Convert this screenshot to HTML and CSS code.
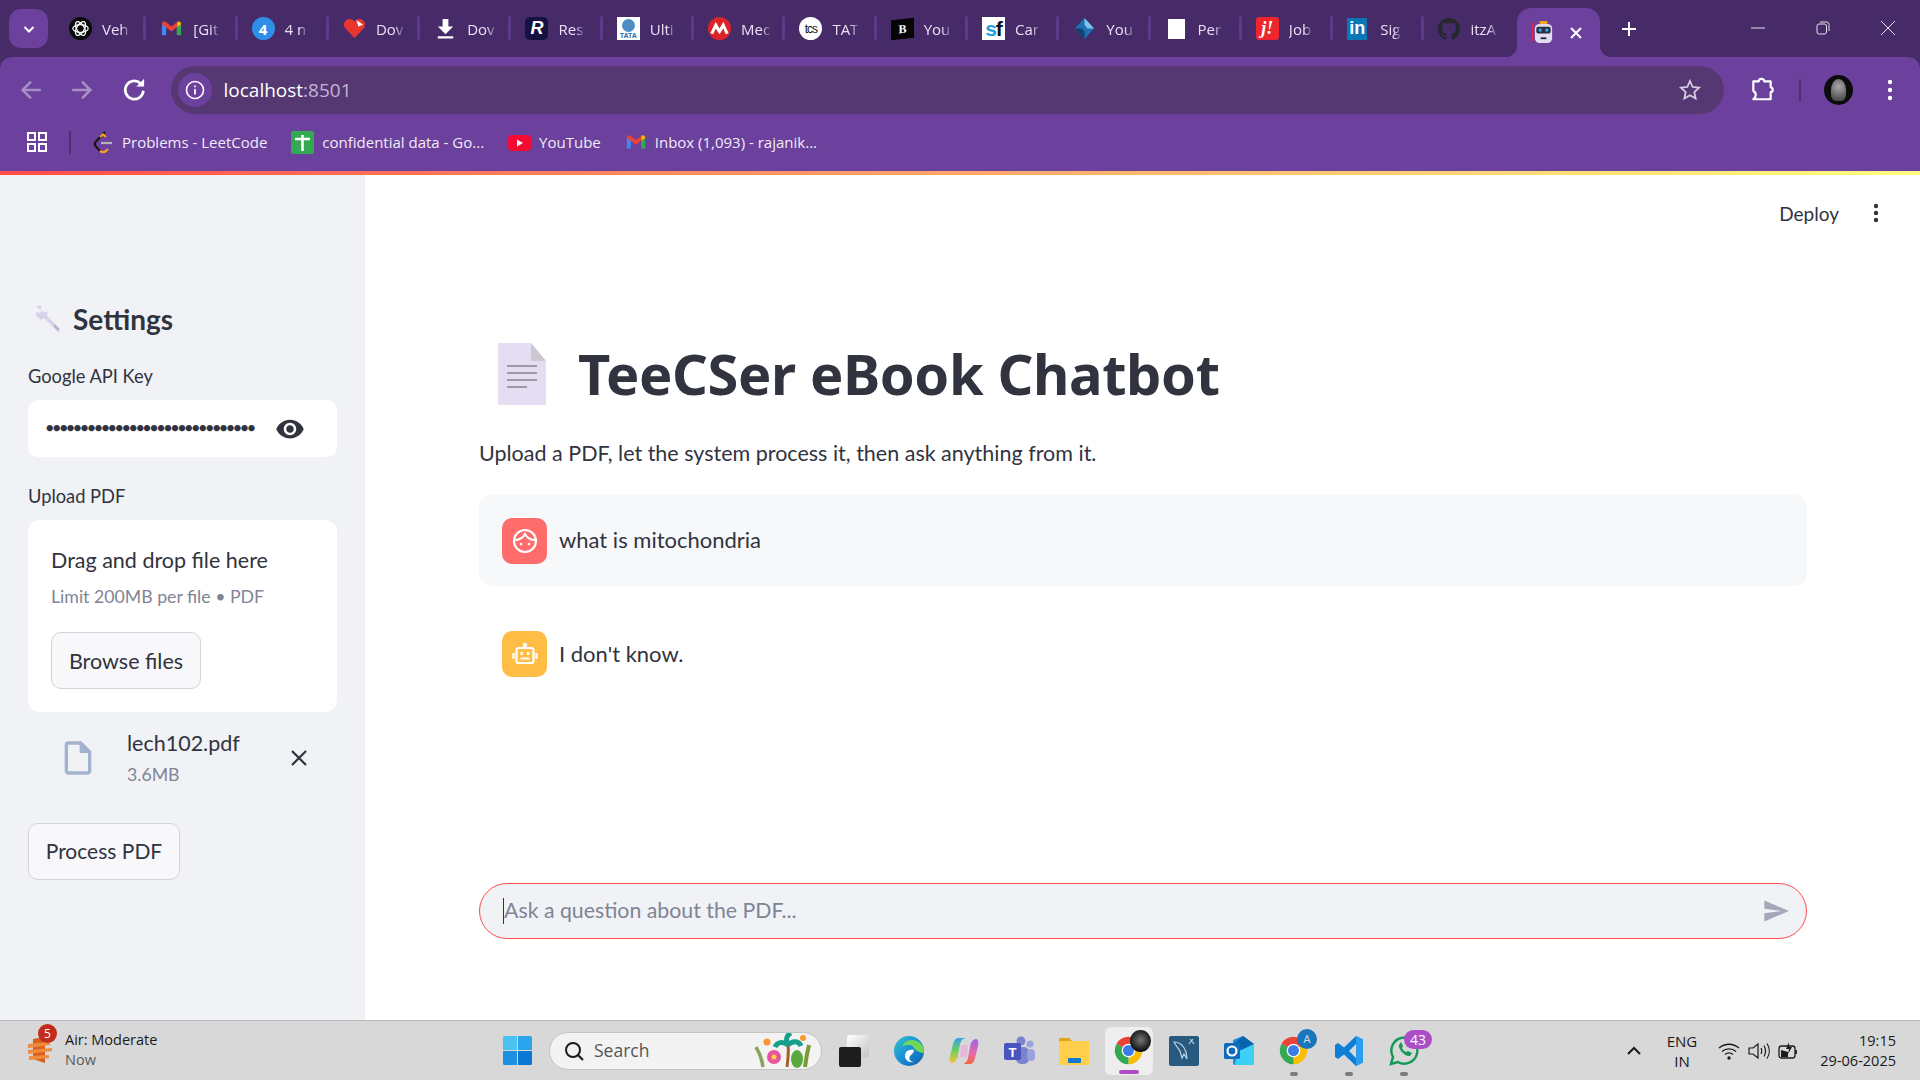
FILE: index.html
```html
<!DOCTYPE html>
<html lang="en">
<head>
  <meta charset="UTF-8" />
  <meta name="viewport" content="width=device-width, initial-scale=1.0" />
  <title>TeeCSer eBook Chatbot</title>
  <link rel="stylesheet" href="styles.css">
</head>
<body>

  <svg class="defs" width="0" height="0">
    <symbol id="chrome" viewBox="0 0 24 24">
      <path fill="#ea4335" d="M12 12L3.34 7A10 10 0 0 1 20.66 7Z"/>
      <path fill="#fbbc04" d="M12 12L20.66 7A10 10 0 0 1 12 22Z"/>
      <path fill="#34a853" d="M12 12L12 22A10 10 0 0 1 3.34 7Z"/>
      <circle cx="12" cy="12" r="5" fill="#fff"/>
      <circle cx="12" cy="12" r="4" fill="#3b7de8"/>
    </symbol>
    <symbol id="gmail" viewBox="0 0 24 24">
      <path fill="#4285f4" d="M2 7v12h4.5v-9z"/>
      <path fill="#34a853" d="M17.5 10v9H22V7z"/>
      <path fill="#ea4335" d="M2 7.5C2 5 4.4 4 6 5.2l6 4.6 6-4.6v5L12 15l-10-7.5z"/>
      <path fill="#fbbc04" d="M18 5.2C19.6 4 22 5 22 7.5l-4 3z"/>
    </symbol>
  </svg>

  <!-- browser tabs -->
  <div class="tabstrip">
    <button class="tab-search">
      <svg width="14" height="14" viewBox="0 0 14 14"><path d="M2.5 5l4.5 4.5L11.5 5" fill="none" stroke="#fff" stroke-width="2"/></svg>
    </button>
    <div class="tabs">
      <div class="tab">
        <svg class="fav" viewBox="0 0 24 24"><circle cx="12" cy="12" r="12" fill="#0a0a0a"/><g fill="none" stroke="#fff" stroke-width="1.3"><ellipse cx="12" cy="12" rx="8" ry="4"/><ellipse cx="12" cy="12" rx="8" ry="4" transform="rotate(60 12 12)"/><ellipse cx="12" cy="12" rx="8" ry="4" transform="rotate(120 12 12)"/></g></svg>
        <span class="tab-text">Veh</span>
      </div>
      <div class="tab">
        <svg class="fav" viewBox="0 0 24 24"><use href="#gmail"/></svg>
        <span class="tab-text">[Git</span>
      </div>
      <div class="tab">
        <span class="fav fav-four">4</span>
        <span class="tab-text">4 n</span>
      </div>
      <div class="tab">
        <svg class="fav" viewBox="0 0 24 24"><path fill="#e8352e" d="M12 22L2.5 12C-1 7.5 2 2 7 2c2 0 4 1 5 3 1-2 3-3 5-3 5 0 8 5.500 4.500 10z"/><path fill="#fff" d="M14 3l7 5-5 2z"/></svg>
        <span class="tab-text">Dov</span>
      </div>
      <div class="tab">
        <svg class="fav" viewBox="0 0 24 24"><path fill="#fff" d="M9 2h6v8h5l-8 8-8-8h5zM4 20h16v2.500H4z"/></svg>
        <span class="tab-text">Dov</span>
      </div>
      <div class="tab">
        <span class="fav fav-r">R</span>
        <span class="tab-text">Res</span>
      </div>
      <div class="tab">
        <span class="fav fav-tata"><i></i>TATA</span>
        <span class="tab-text">Ulti</span>
      </div>
      <div class="tab">
        <svg class="fav" viewBox="0 0 24 24"><circle cx="12" cy="12" r="12" fill="#dd2326"/><path fill="#fff" d="M2.500 17L8 5l4 7 4-7 5.500 12-3 1-2.500-6-4 6-4-6-2.500 6z"/></svg>
        <span class="tab-text">Mec</span>
      </div>
      <div class="tab">
        <span class="fav fav-tcs">tcs</span>
        <span class="tab-text">TAT</span>
      </div>
      <div class="tab">
        <span class="fav fav-b">B</span>
        <span class="tab-text">You</span>
      </div>
      <div class="tab">
        <span class="fav fav-sf"><b>s</b>f</span>
        <span class="tab-text">Car</span>
      </div>
      <div class="tab">
        <svg class="fav" viewBox="0 0 24 24"><path fill="#1f6fb5" d="M12 1l10 11-10 11L2 12z"/><path fill="#7fc4e8" d="M12 1l10 11h-7L12 8z"/><path fill="#12406f" d="M2 12h7l3 3v8z"/></svg>
        <span class="tab-text">You</span>
      </div>
      <div class="tab">
        <span class="fav fav-page"></span>
        <span class="tab-text">Per</span>
      </div>
      <div class="tab">
        <span class="fav fav-j">j!</span>
        <span class="tab-text">Job</span>
      </div>
      <div class="tab">
        <span class="fav fav-in">in</span>
        <span class="tab-text">Sig</span>
      </div>
      <div class="tab tab-last">
        <svg class="fav fav-git" viewBox="0 0 16 16"><path fill="#24272d" d="M8 0C3.58 0 0 3.58 0 8c0 3.54 2.29 6.53 5.47 7.59.4.07.55-.17.55-.38 0-.19-.01-.82-.01-1.49-2.01.37-2.53-.49-2.69-.94-.09-.23-.48-.94-.82-1.13-.28-.15-.68-.52-.01-.53.63-.01 1.08.58 1.23.82.72 1.21 1.87.87 2.33.66.07-.52.28-.87.51-1.07-1.78-.2-3.64-.89-3.64-3.95 0-.87.31-1.59.82-2.15-.08-.2-.36-1.02.08-2.12 0 0 .67-.21 2.2.82.64-.18 1.32-.27 2-.27.68 0 1.36.09 2 .27 1.53-1.04 2.2-.82 2.2-.82.44 1.1.16 1.92.08 2.12.51.56.82 1.27.82 2.15 0 3.07-1.87 3.75-3.65 3.95.29.25.54.73.54 1.48 0 1.07-.01 1.93-.01 2.2 0 .21.15.46.55.38A8.013 8.013 0 0016 8c0-4.42-3.58-8-8-8z"/></svg>
        <span class="tab-text">itzA</span>
      </div>
      <div class="tab-active">
        <svg class="fav" viewBox="0 0 24 24"><path fill="#e0244f" d="M0 1h1.500v20H0z"/><path fill="#f5a623" d="M8 0h8v4H8z"/><rect x="3" y="3" width="18" height="20" rx="5" fill="#e6dcf2"/><rect x="4.500" y="6" width="15" height="7" rx="2" fill="#27303f"/><rect x="7" y="8" width="3" height="3" fill="#38a5f5"/><rect x="14" y="8" width="3" height="3" fill="#38a5f5"/><rect x="9" y="17" width="6" height="2" fill="#27303f"/></svg>
        <svg class="tab-close" width="14" height="14" viewBox="0 0 14 14"><path d="M2 2l10 10M12 2L2 12" stroke="#fff" stroke-width="2"/></svg>
      </div>
    </div>
    <svg class="new-tab" width="16" height="16" viewBox="0 0 16 16"><path d="M8 1v14M1 8h14" stroke="#fff" stroke-width="2"/></svg>
    <div class="win-controls">
      <svg width="14" height="14" viewBox="0 0 14 14"><path d="M0 7h14" stroke="#e6deef" stroke-width="1"/></svg>
      <svg width="14" height="14" viewBox="0 0 14 14"><rect x="1" y="3" width="9.500" height="10" rx="2" fill="none" stroke="#e6deef"/><path d="M4 1h6.500A2.500 2.500 0 0 1 13 3.500V10" fill="none" stroke="#e6deef"/></svg>
      <svg width="14" height="14" viewBox="0 0 14 14"><path d="M0 0l14 14M14 0L0 14" stroke="#e6deef"/></svg>
    </div>
  </div>

  <!-- address bar -->
  <div class="toolbar">
    <svg class="nav-icon" viewBox="0 0 20 20"><path d="M17 10H4M10 4l-6 6 6 6" fill="none" stroke="#a58fc4" stroke-width="1.800"/></svg>
    <svg class="nav-icon" viewBox="0 0 20 20"><path d="M3 10h13M10 4l6 6-6 6" fill="none" stroke="#a58fc4" stroke-width="1.800"/></svg>
    <svg class="nav-icon nav-reload" viewBox="0 0 20 20"><path d="M16 10.500A6.500 6.500 0 1 1 14 5.300" fill="none" stroke="#fff" stroke-width="1.900"/><path d="M16.500 2v5.500H11z" fill="#fff"/></svg>
    <div class="omnibox">
      <span class="site-info">
        <svg width="20" height="20" viewBox="0 0 20 20"><circle cx="10" cy="10" r="8.500" fill="none" stroke="#fff" stroke-width="1.600"/><path d="M10 9v5.500M10 5.500v1.800" stroke="#fff" stroke-width="1.800"/></svg>
      </span>
      <span class="url">localhost<span class="url-port">:8501</span></span>
      <svg class="star" width="24" height="24" viewBox="0 0 24 24"><path d="M12 3l2.700 6 6.300.7-4.700 4.300 1.300 6.500-5.600-3.300-5.600 3.300L7.700 14 3 9.700 9.300 9z" fill="none" stroke="#d5cbe0" stroke-width="1.800"/></svg>
    </div>
    <svg class="ext-icon" width="26" height="26" viewBox="0 0 24 24"><path d="M4 4h5c0-3 5-3 5 0h6v5.500c2.500 0 2.500 4.500 0 4.500v6.500H4c3-2 3-6 0-7.500z" fill="none" stroke="#fff" stroke-width="2" stroke-linejoin="round"/></svg>
    <span class="tool-sep"></span>
    <span class="avatar"><i></i></span>
    <svg class="menu-dots" width="6" height="24" viewBox="0 0 6 24"><circle cx="3" cy="4" r="2.200" fill="#fff"/><circle cx="3" cy="12" r="2.200" fill="#fff"/><circle cx="3" cy="20" r="2.200" fill="#fff"/></svg>
  </div>

  <!-- bookmarks -->
  <div class="bookmarks">
    <svg class="apps" width="20" height="20" viewBox="0 0 20 20"><g fill="none" stroke="#fff" stroke-width="2"><rect x="1" y="1" width="7" height="7"/><rect x="12" y="1" width="7" height="7"/><rect x="1" y="12" width="7" height="7"/><rect x="12" y="12" width="7" height="7"/></g></svg>
    <span class="mark-sep"></span>
    <div class="mark">
      <svg width="22" height="24" viewBox="0 0 22 24"><path d="M13 2L4 11.500c-1.500 1.500-1.500 3.500 0 5l4 4.500" fill="none" stroke="#161616" stroke-width="2.200"/><path d="M8 21c2 1.500 4 1.500 6 0l2-2M8 7l3-2.500 3 2.500" fill="none" stroke="#f5a11c" stroke-width="2.200"/><path d="M9 13h11" stroke="#b6b1b8" stroke-width="2.200"/></svg>
      <span>Problems - LeetCode</span>
    </div>
    <div class="mark">
      <svg width="23" height="23" viewBox="0 0 23 23"><rect width="23" height="23" rx="2" fill="#34a853"/><path d="M4 8h15M11.500 4v16" stroke="#fff" stroke-width="2.600"/></svg>
      <span>confidential data - Go...</span>
    </div>
    <div class="mark">
      <svg width="23" height="23" viewBox="0 0 23 23"><rect y="4" width="23" height="16" rx="4" fill="#f40b34"/><path d="M9 8.500v7l6-3.500z" fill="#fff"/></svg>
      <span>YouTube</span>
    </div>
    <div class="mark">
      <svg width="22" height="22" viewBox="0 0 24 24"><use href="#gmail"/></svg>
      <span>Inbox (1,093) - rajanik...</span>
    </div>
  </div>
  <div class="load-bar"></div>

  <!-- streamlit page -->
  <div class="page">
    <aside class="sidebar">
      <div class="side-title">
        <svg width="32" height="30" viewBox="0 0 30 28"><path d="M3 2l5-1-1 4 3 3 4-1-1 4 12 12c1.500 1.500-1 4-2.500 2.500L11 13.500l-4 1-4-3.500 0-4 3 1.500 2-2z" fill="#d9d0ea"/><path d="M20 20l4 4" stroke="#b9aecb" stroke-width="2"/></svg>
        <h2>Settings</h2>
      </div>
      <label class="field-label">Google API Key</label>
      <div class="key-input">
        <span class="key-dots">••••••••••••••••••••••••••••••</span>
        <svg width="30" height="30" viewBox="0 0 24 24"><path fill="#31333f" d="M12 4.500C7 4.500 2.730 7.610 1 12c1.730 4.390 6 7.500 11 7.500s9.270-3.110 11-7.500c-1.730-4.390-6-7.500-11-7.500zM12 17c-2.760 0-5-2.240-5-5s2.240-5 5-5 5 2.240 5 5-2.240 5-5 5zm0-8c-1.660 0-3 1.340-3 3s1.340 3 3 3 3-1.340 3-3-1.340-3-3-3z"/></svg>
      </div>
      <label class="field-label upload-label">Upload PDF</label>
      <div class="dropzone">
        <div class="drop-title">Drag and drop file here</div>
        <div class="drop-limit">Limit 200MB per file • PDF</div>
        <button class="st-button browse">Browse files</button>
      </div>
      <div class="file-row">
        <svg class="file-icon" width="40" height="40" viewBox="0 0 24 24"><path fill="#a3b2cf" d="M14 2H6c-1.100 0-2 .9-2 2v16c0 1.100.9 2 2 2h12c1.100 0 2-.9 2-2V8l-6-6zM6 20V4h7v5h5v11H6z"/></svg>
        <div class="file-info">
          <div class="file-name">lech102.pdf</div>
          <div class="file-size">3.6MB</div>
        </div>
        <svg class="file-remove" width="18" height="18" viewBox="0 0 18 18"><path d="M2 2l14 14M16 2L2 16" stroke="#31333f" stroke-width="2.200"/></svg>
      </div>
      <button class="st-button process">Process PDF</button>
    </aside>

    <main class="main">
      <div class="topbar">
        <span class="deploy">Deploy</span>
        <svg width="6" height="20" viewBox="0 0 6 20"><circle cx="3" cy="3" r="2.200" fill="#31333f"/><circle cx="3" cy="10" r="2.200" fill="#31333f"/><circle cx="3" cy="17" r="2.200" fill="#31333f"/></svg>
      </div>
      <div class="heading">
        <svg class="doc-icon" width="48" height="62" viewBox="0 0 48 62"><path d="M1 0h32l15 18v43a1 1 0 0 1-1 1H1a1 1 0 0 1-1-1V1a1 1 0 0 1 1-1z" fill="#e5ddf1"/><path d="M33 0l15 18H33z" fill="#cbc8d2"/><path d="M9 23h30M9 30h30M9 37h30M9 44h20" stroke="#9d99a4" stroke-width="2.200"/></svg>
        <h1>TeeCSer eBook Chatbot</h1>
      </div>
      <p class="intro">Upload a PDF, let the system process it, then ask anything from it.</p>
      <div class="chat-msg chat-user">
        <span class="chat-avatar avatar-user">
          <svg width="30" height="30" viewBox="0 0 30 30"><circle cx="15" cy="15" r="11" fill="none" stroke="#fff" stroke-width="2.200"/><path d="M5 14c5 0 8-2 10-6 2 4 5 6 10 6" fill="none" stroke="#fff" stroke-width="2"/><circle cx="11" cy="18" r="1.300" fill="#fff"/><circle cx="19" cy="18" r="1.300" fill="#fff"/></svg>
        </span>
        <span class="chat-text">what is mitochondria</span>
      </div>
      <div class="chat-msg">
        <span class="chat-avatar avatar-bot">
          <svg width="30" height="30" viewBox="0 0 30 30"><rect x="6.500" y="9" width="17" height="15" rx="2" fill="none" stroke="#fff" stroke-width="2.200"/><circle cx="15" cy="6" r="2.200" fill="#fff"/><path d="M15 6v3M3.500 14v6M26.500 14v6" stroke="#fff" stroke-width="2.200"/><rect x="10.500" y="13" width="2.400" height="3" fill="#fff"/><rect x="17" y="13" width="2.400" height="3" fill="#fff"/><path d="M10.500 19.500h9" stroke="#fff" stroke-width="2"/></svg>
        </span>
        <span class="chat-text">I don't know.</span>
      </div>
      <div class="chat-input">
        <span class="caret"></span>
        <span class="placeholder">Ask a question about the PDF...</span>
        <svg width="28" height="28" viewBox="0 0 24 24"><path fill="#a3a8b8" d="M2.010 21L23 12 2.010 3 2 10l15 2-15 2z"/></svg>
      </div>
    </main>
  </div>

  <!-- windows taskbar -->
  <footer class="taskbar">
    <div class="weather">
      <svg class="weather-icon" width="26" height="30" viewBox="0 0 26 30"><path d="M6 4l12-2v26L6 24z" fill="#d9601a"/><path d="M1 9l22-2v3L1 13zM1 15l24-2v3L1 19zM2 21l20-1v3L2 25z" fill="#f08a3c"/></svg>
      <span class="weather-badge">5</span>
      <div class="weather-text">
        <div>Air: Moderate</div>
        <div class="weather-sub">Now</div>
      </div>
    </div>
    <svg class="win-logo" width="29" height="29" viewBox="0 0 29 29"><path d="M0 1.500A1.500 1.500 0 0 1 1.500 0H14v14H0z" fill="#4cc2f1"/><path d="M15 0h12.500A1.500 1.500 0 0 1 29 1.500V14H15z" fill="#2aa5ec"/><path d="M0 15h14v14H1.500A1.500 1.500 0 0 1 0 27.500z" fill="#1c8fe2"/><path d="M15 15h14v12.500a1.500 1.500 0 0 1-1.500 1.500H15z" fill="#0b78d4"/></svg>
    <div class="search-box">
      <svg width="22" height="22" viewBox="0 0 22 22"><circle cx="10" cy="10" r="7" fill="none" stroke="#1c1c1c" stroke-width="2"/><path d="M15 15l5 5" stroke="#1c1c1c" stroke-width="2.200"/></svg>
      <span class="search-label">Search</span>
      <svg class="search-art" width="62" height="36" viewBox="0 0 62 36"><path d="M3 14c3 5 6 12 7 20" fill="none" stroke="#8aa35a" stroke-width="3.500"/><path d="M34 34c1-8 2-15 1-22" stroke="#a0622c" stroke-width="3" fill="none"/><path d="M35 12c-5-4-11-3-13 2M35 12c-3-6-1-10 3-12M35 12c5-5 11-4 13 1" fill="none" stroke="#16a08c" stroke-width="5"/><circle cx="21" cy="24" r="7" fill="#e9559c"/><circle cx="21" cy="24" r="2.500" fill="#f7d34d"/><ellipse cx="44" cy="26" rx="6" ry="9" fill="#58a840"/><path d="M56 12c-2 8-3 14-4 22" stroke="#7a9a3a" stroke-width="4" fill="none"/><circle cx="14" cy="9" r="3.500" fill="#f7972c"/><circle cx="50" cy="5" r="3" fill="#f7972c"/></svg>
    </div>
    <div class="task-apps">
      <div class="app">
        <span class="ic-taskview"><i></i><b></b></span>
      </div>
      <div class="app">
        <svg width="32" height="32" viewBox="0 0 32 32"><defs><linearGradient id="edgeG" x1="0" y1="0" x2="1" y2="1"><stop offset="0" stop-color="#36c5c4"/><stop offset=".5" stop-color="#1a8fd8"/><stop offset="1" stop-color="#0c5ba8"/></linearGradient></defs><circle cx="16" cy="16" r="15" fill="url(#edgeG)"/><path d="M31 16c0-7-6-11-12-11-5 0-9 3-10 7 3-3 10-3 12 1 1 2 10 8 10 3z" fill="#6ed85a"/><path d="M21 15c-5-1-9 1-9 6 0 4 4 7 9 6-5 0-6-5-3-7 1-1 3-3 3-5z" fill="#fff"/></svg>
      </div>
      <div class="app">
        <svg width="30" height="30" viewBox="0 0 30 30"><defs><linearGradient id="copA" x1="0" y1="0" x2="0" y2="1"><stop offset="0" stop-color="#2aa4e8"/><stop offset=".5" stop-color="#6fcf5c"/><stop offset="1" stop-color="#f6c23c"/></linearGradient><linearGradient id="copB" x1="0" y1="0" x2="0" y2="1"><stop offset="0" stop-color="#a262e6"/><stop offset=".6" stop-color="#e86aa6"/><stop offset="1" stop-color="#f4653f"/></linearGradient></defs><path d="M9 2h8c-3 0-5 2-6 6l-2 11c-.5 4-3 8-6 8-2 0-3-3-2-7l3-12C5 4 7 2 9 2z" fill="url(#copA)"/><path d="M21 28h-8c3 0 5-2 6-6l2-11c.5-4 3-8 6-8 2 0 3 3 2 7l-3 12c-1 4-3 6-5 6z" fill="url(#copB)"/><path d="M12 9h7l-1 12h-7z" fill="#e8b8d8"/></svg>
      </div>
      <div class="app">
        <svg width="32" height="30" viewBox="0 0 32 30"><circle cx="18" cy="5" r="4.500" fill="#7b83cf"/><circle cx="27" cy="8" r="3.500" fill="#9ba2e0"/><rect x="13" y="11" width="13" height="17" rx="5" fill="#7b83cf"/><rect x="24" y="13" width="8" height="12" rx="4" fill="#9ba2e0"/><rect x="1" y="7" width="17" height="17" rx="2" fill="#4b53bc"/><text x="9.500" y="20.500" class="ic-t">T</text></svg>
      </div>
      <div class="app">
        <svg width="32" height="30" viewBox="0 0 32 30"><path d="M1 3a1 1 0 0 1 1-1h9l3 3h-13z" fill="#e2a412"/><rect x="1" y="5" width="30" height="24" rx="1" fill="#ffcf4b"/><rect x="10" y="22" width="13" height="5" rx="1" fill="#0b78d4"/></svg>
      </div>
      <div class="app app-active">
        <svg width="33" height="33" viewBox="0 0 24 24"><use href="#chrome"/></svg>
        <span class="chrome-badge"></span>
        <span class="running run-active"></span>
      </div>
      <div class="app">
        <svg width="30" height="30" viewBox="0 0 30 30"><rect width="30" height="30" rx="2" fill="#285a80"/><path d="M5 6c6 0 10 4 12 10l1 7-3-5-2 4-2-7c-2-3-4-5-6-9zM21 3l4 5M24 3l-4 5" fill="none" stroke="#bcd2e2" stroke-width="1.200"/></svg>
      </div>
      <div class="app">
        <svg width="32" height="30" viewBox="0 0 32 30"><path d="M10 4l10-4 11 8v19a2 2 0 0 1-2 2H12a2 2 0 0 1-2-2z" fill="#1490df"/><path d="M20 0l11 8-11 7-10-7z" fill="#0a64ad"/><path d="M14 16l17-8v19a2 2 0 0 1-2 2H12z" fill="#3dd0f7"/><rect x="1" y="7" width="16" height="16" rx="1.500" fill="#0f6cbd"/><circle cx="9" cy="15" r="4.500" fill="none" stroke="#fff" stroke-width="2.200"/></svg>
      </div>
      <div class="app">
        <svg width="33" height="33" viewBox="0 0 24 24"><use href="#chrome"/></svg>
        <span class="chrome-a">A</span>
        <span class="running"></span>
      </div>
      <div class="app">
        <svg width="30" height="32" viewBox="0 0 30 32"><path fill="#0e7fd6" fill-rule="evenodd" d="M22 1l7 3.500v23L22 31 10 19.500l-6 4.500-3-2V10l3-2 6 4.500zM22 9l-7 7 7 7z"/><path fill="#2a9ff0" d="M22 1l7 3.500v23L22 31z"/></svg>
        <span class="running"></span>
      </div>
      <div class="app">
        <svg width="32" height="32" viewBox="0 0 32 32"><path d="M3 29l2-7a13 13 0 1 1 5 5z" fill="none" stroke="#139a57" stroke-width="2.500"/><path d="M11 10c-1 4 6 12 11 11l2-3-4-2-2 1c-2-1-3-2-4-4l1-2-2-4z" fill="#139a57"/></svg>
        <span class="wa-badge">43</span>
        <span class="running"></span>
      </div>
    </div>
    <div class="tray">
      <svg width="16" height="10" viewBox="0 0 16 10"><path d="M2 8l6-6 6 6" fill="none" stroke="#1a1a1a" stroke-width="2"/></svg>
      <div class="tray-lang"><div>ENG</div><div>IN</div></div>
      <div class="tray-icons">
        <svg width="22" height="20" viewBox="0 0 22 20"><path d="M1 7c6-5 14-5 20 0M4 10.500c4-3.500 10-3.500 14 0M7 13.500c2.500-2 5.500-2 8 0" fill="none" stroke="#1a1a1a" stroke-width="1.300"/><circle cx="11" cy="17" r="1.700" fill="#1a1a1a"/></svg>
        <svg width="22" height="20" viewBox="0 0 22 20"><path d="M1 7h4l5-4v14l-5-4H1z" fill="none" stroke="#1a1a1a" stroke-width="1.200"/><path d="M13 7c1 2 1 4 0 6M16 4.500c2 3.500 2 7.500 0 11M19 2.500c3 4.500 3 10.500 0 15" fill="none" stroke="#1a1a1a" stroke-width="1.200"/></svg>
        <svg width="20" height="20" viewBox="0 0 20 20"><rect x="1" y="5" width="16" height="12" rx="2.500" fill="none" stroke="#1a1a1a" stroke-width="1.300"/><path d="M3 9l7 2v5H3z" fill="#1a1a1a"/><path d="M11 1L8 8h3l-1 5 4-7h-3z" fill="#1a1a1a"/><path d="M18 9v4" stroke="#1a1a1a" stroke-width="1.800"/></svg>
      </div>
      <div class="tray-clock"><div>19:15</div><div>29-06-2025</div></div>
    </div>
  </footer>

</body>
</html>
```

FILE: styles.css
```css
* {
  margin: 0;
  padding: 0;
  box-sizing: border-box;
}

body {
  height: 100vh;
  display: flex;
  flex-direction: column;
  overflow: hidden;
  font-family: "Lato", "Liberation Sans", sans-serif;
  color: #31333f;
  background: #472b68;
}

button {
  font-family: inherit;
}

.defs {
  position: absolute;
}

/* tab strip */
.tabstrip {
  height: 57px;
  flex: none;
  display: flex;
  align-items: flex-end;
  background: #472b68;
  color: #eadff5;
  font-family: "Open Sans", sans-serif;
  font-size: 15px;
}

.tab-search {
  width: 39px;
  height: 39px;
  margin: 0 7px 9px 9px;
  border: none;
  border-radius: 12px;
  background: #6c409d;
  display: flex;
  align-items: center;
  justify-content: center;
}

.tabs {
  display: flex;
  align-items: flex-end;
}

.tab {
  width: 91.300px;
  height: 49px;
  padding: 0 0 8px 14px;
  display: flex;
  align-items: center;
  gap: 10px;
  position: relative;
}

.tab::after {
  content: "";
  position: absolute;
  right: 0;
  top: 8px;
  width: 3px;
  height: 24px;
  border-radius: 2px;
  background: #5d3a8a;
}

.tab-last::after {
  display: none;
}

.tab-text {
  white-space: nowrap;
  -webkit-mask-image: linear-gradient(to right, #000 70%, rgba(0, 0, 0, 0.25));
  mask-image: linear-gradient(to right, #000 70%, rgba(0, 0, 0, 0.25));
}

.fav {
  width: 23px;
  height: 23px;
  flex: none;
  display: flex;
  align-items: center;
  justify-content: center;
  font-style: normal;
}

.fav-four {
  border-radius: 50%;
  background: #2f8fe8;
  color: #fff;
  font-weight: 700;
  font-size: 15px;
}

.fav-r {
  border-radius: 5px;
  background: #15123f;
  color: #fff;
  font: italic 700 18px "Liberation Sans", sans-serif;
}

.fav-tata {
  flex-direction: column;
  background: #fff;
  color: #2b6aa8;
  font: 700 7px "Liberation Sans", sans-serif;
}

.fav-tata i {
  width: 13px;
  height: 13px;
  border-radius: 50%;
  background: #4d8fc5;
}

.fav-tcs {
  border-radius: 50%;
  background: #fff;
  color: #111;
  font: 12px "Liberation Sans", sans-serif;
  letter-spacing: -1px;
}

.fav-b {
  height: 20px;
  background: #050505;
  color: #fff;
  font: 700 12px "Liberation Serif", serif;
  transform: skewY(-6deg);
}

.fav-sf {
  background: #fff;
  color: #111;
  font: 700 21px/23px "Liberation Sans", sans-serif;
  letter-spacing: -1px;
}

.fav-sf b {
  color: #1fa0e0;
}

.fav-page {
  width: 17px;
  height: 20px;
  margin: 0 3px;
  background: #fff;
}

.fav-j {
  border-radius: 3px;
  background: #f0262e;
  color: #fff;
  font: italic 700 18px "Liberation Serif", serif;
}

.fav-in {
  width: 20px;
  height: 22px;
  margin-right: 3px;
  background: #0a78b5;
  color: #fff;
  font: 700 18px "Liberation Sans", sans-serif;
}

.fav-git {
  width: 22px;
  height: 26px;
}

.tab-active {
  width: 83px;
  height: 49px;
  margin-left: 1.500px;
  padding-left: 15px;
  display: flex;
  align-items: center;
  gap: 14px;
  background: #6c409d;
  border-radius: 14px 14px 0 0;
  position: relative;
}

.tab-active::before,
.tab-active::after {
  content: "";
  position: absolute;
  bottom: 0;
  width: 12px;
  height: 12px;
  background: radial-gradient(circle at 0 0, transparent 12px, #6c409d 12.500px);
}

.tab-active::before {
  left: -12px;
}

.tab-active::after {
  right: -12px;
  transform: scaleX(-1);
}

.tab-close {
  flex: none;
}

.new-tab {
  margin: 0 0 20px 21px;
}

.win-controls {
  margin-left: auto;
  display: flex;
  align-items: center;
  gap: 51px;
  padding: 0 25px 22px 0;
}

/* address bar */
.toolbar {
  height: 66px;
  flex: none;
  display: flex;
  align-items: center;
  padding: 0 0 0 17px;
  background: #6c409d;
  border-radius: 12px 12px 0 0;
}

.nav-icon {
  width: 28px;
  height: 28px;
  margin-right: 23px;
}

.nav-reload {
  margin-left: 2px;
}

.omnibox {
  width: 1553px;
  height: 48px;
  margin: 0 0 0 -1.500px;
  display: flex;
  align-items: center;
  background: #553872;
  border-radius: 24px;
  padding: 0 22px 0 7px;
}

.site-info {
  width: 34px;
  height: 34px;
  border-radius: 50%;
  background: #6c409d;
  display: flex;
  align-items: center;
  justify-content: center;
}

.url {
  margin-left: 12px;
  font-family: "Open Sans", sans-serif;
  font-size: 19px;
  color: #fff;
}

.url-port {
  color: #c4b4d6;
}

.star {
  margin-left: auto;
}

.ext-icon {
  margin-left: 25px;
}

.tool-sep {
  width: 2px;
  height: 23px;
  margin-left: 24px;
  background: #4e2f74;
}

.avatar {
  width: 29px;
  height: 30px;
  margin-left: 23px;
  border-radius: 50%;
  background: #0c0c0c;
  display: flex;
  align-items: center;
  justify-content: center;
}

.avatar i {
  width: 15px;
  height: 22px;
  border-radius: 50% 50% 30% 30%;
  background: radial-gradient(circle at 50% 35%, #a8a8a8, #3a3a3a);
}

.menu-dots {
  margin-left: 34px;
}

/* bookmarks */
.bookmarks {
  height: 48px;
  flex: none;
  display: flex;
  align-items: center;
  padding: 0 0 10px 27px;
  background: #6c409d;
  color: #f1ebf7;
  font-family: "Open Sans", sans-serif;
  font-size: 15px;
}

.mark-sep {
  width: 2px;
  height: 23px;
  margin: 0 21px 0 22px;
  background: #4e2f74;
}

.mark {
  display: flex;
  align-items: center;
  gap: 8px;
  margin-right: 24px;
  white-space: nowrap;
}

.load-bar {
  height: 4px;
  flex: none;
  background: linear-gradient(to right, #ff4b4b, #ffa66b 50%, #fffd80);
}

/* page */
.page {
  flex: 1;
  min-height: 0;
  display: flex;
  background: #fff;
}

.sidebar {
  width: 365px;
  flex: none;
  padding: 124px 28px 0 28px;
  background: #f0f2f6;
}

.side-title {
  height: 40px;
  display: flex;
  align-items: center;
  gap: 8px;
  padding-left: 5px;
}

.side-title h2 {
  font-size: 28px;
  font-weight: 700;
}

.field-label {
  display: block;
  margin-top: 26px;
  font-size: 18.300px;
  line-height: 22px;
}

.upload-label {
  margin-top: 28px;
}

.key-input {
  height: 57px;
  margin-top: 13px;
  padding: 0 32px 0 16px;
  display: flex;
  align-items: center;
  justify-content: space-between;
  background: #fff;
  border-radius: 10px;
}

.key-dots {
  white-space: nowrap;
  font: 700 18px "DejaVu Sans", sans-serif;
  letter-spacing: -4.550px;
}

.dropzone {
  height: 192px;
  margin-top: 13px;
  padding: 24px 23px 0;
  background: #fff;
  border-radius: 12px;
}

.drop-title {
  font-size: 21.500px;
  line-height: 32px;
}

.drop-limit {
  margin-top: 9px;
  font-size: 17.700px;
  line-height: 24px;
  color: #808495;
}

.st-button {
  height: 57px;
  padding-bottom: 2px;
  border: 1px solid #d3d4d9;
  border-radius: 10px;
  background: #f8f8fb;
  color: #31333f;
  font-size: 21.500px;
}

.browse {
  width: 150px;
  margin-top: 23px;
  padding-bottom: 0;
}

.file-row {
  height: 59px;
  margin-top: 16px;
  display: flex;
  align-items: center;
  padding-left: 30px;
}

.file-info {
  margin-left: 29px;
  width: 163px;
}

.file-name {
  font-size: 21.500px;
  line-height: 30px;
}

.file-size {
  margin-top: 5px;
  font-size: 17.700px;
  line-height: 24px;
  color: #808495;
}

.process {
  width: 152px;
  margin-top: 36px;
  font-size: 21px;
}

.main {
  flex: 1;
  min-width: 0;
  display: flex;
  flex-direction: column;
  padding: 0 113px 81px 114px;
}

.topbar {
  height: 76px;
  flex: none;
  display: flex;
  align-items: center;
  justify-content: flex-end;
  gap: 34px;
  margin-right: -72px;
}

.deploy {
  font-size: 19px;
}

.heading {
  height: 78px;
  margin-top: 83px;
  display: flex;
  align-items: center;
  padding-left: 19px;
  gap: 32px;
}

.doc-icon {
  margin-top: 2px;
}

.heading h1 {
  font-family: "Noto Sans", sans-serif;
  font-size: 56px;
  font-weight: 700;
  letter-spacing: -0.400px;
  white-space: nowrap;
}

.intro {
  margin-top: 25px;
  font-size: 21.500px;
  line-height: 32px;
}

.chat-msg {
  height: 91px;
  margin-top: 22px;
  padding: 0 23px;
  display: flex;
  align-items: center;
  gap: 12px;
  font-size: 22px;
  border-radius: 12px;
}

.chat-user {
  margin-top: 26px;
  background: #f7f8fa;
}

.chat-user .chat-text {
  padding-bottom: 2px;
}

.chat-avatar {
  width: 45px;
  height: 46px;
  border-radius: 10px;
  display: flex;
  align-items: center;
  justify-content: center;
}

.avatar-user {
  background: #ff6c6c;
}

.avatar-bot {
  background: #ffbd45;
}

.chat-input {
  height: 56px;
  margin-top: auto;
  padding: 0 16px 0 23px;
  display: flex;
  align-items: center;
  background: #f0f2f6;
  border: 1px solid #ff4b4b;
  border-radius: 28px;
}

.caret {
  width: 1px;
  height: 26px;
  background: #31333f;
}

.placeholder {
  flex: 1;
  padding-bottom: 3px;
  font-size: 21.300px;
  color: #808495;
}

/* taskbar */
.taskbar {
  height: 60px;
  flex: none;
  display: flex;
  align-items: center;
  background: #d8d8d8;
  border-top: 1px solid #b8b8b8;
  font-family: "Open Sans", sans-serif;
  color: #1a1a1a;
}

.weather {
  width: 503px;
  flex: none;
  padding: 0 0 2px 27px;
  display: flex;
  align-items: center;
  gap: 12px;
  position: relative;
  font-size: 14.500px;
  line-height: 20px;
}

.weather-badge {
  position: absolute;
  left: 38px;
  top: -6px;
  width: 19px;
  height: 19px;
  border-radius: 50%;
  background: #c42b1c;
  color: #fff;
  font-size: 12px;
  line-height: 19px;
  text-align: center;
}

.weather-sub {
  color: #5a5a5a;
}

.win-logo {
  flex: none;
}

.search-box {
  width: 273px;
  height: 38px;
  flex: none;
  margin-left: 17px;
  padding: 0 6px 0 13px;
  display: flex;
  align-items: center;
  gap: 9px;
  background: #f3f3f3;
  border: 1px solid #c4c4c4;
  border-radius: 19px;
}

.search-label {
  padding-bottom: 2px;
  font-size: 17.500px;
  color: #555;
}

.search-art {
  margin-left: auto;
}

.task-apps {
  display: flex;
  align-items: center;
  margin-left: 4px;
}

.app {
  width: 55px;
  height: 48px;
  flex: none;
  display: flex;
  align-items: center;
  justify-content: center;
  position: relative;
}

.app-active {
  width: 48px;
  margin: 0 3.500px;
  background: #eeeeee;
  border-radius: 6px;
}

.ic-t {
  fill: #fff;
  font: 700 13px "Liberation Sans", sans-serif;
  text-anchor: middle;
}

.ic-taskview {
  width: 30px;
  height: 32px;
  position: relative;
}

.ic-taskview i {
  position: absolute;
  left: 8px;
  top: 0;
  width: 22px;
  height: 22px;
  border-radius: 2px;
  background: linear-gradient(135deg, #fff, #c4c4c4);
}

.ic-taskview b {
  position: absolute;
  left: 0;
  bottom: 0;
  width: 22px;
  height: 20px;
  border-radius: 2px;
  background: #1d1d1d;
}

.chrome-badge {
  position: absolute;
  right: 2px;
  top: 3px;
  width: 21px;
  height: 22px;
  border-radius: 50%;
  background: radial-gradient(circle at 50% 45%, #777, #111 70%);
}

.chrome-a {
  position: absolute;
  right: 4px;
  top: 2px;
  width: 20px;
  height: 20px;
  border-radius: 50%;
  background: #1b75bb;
  color: #cfe6f7;
  font-size: 11px;
  line-height: 20px;
  text-align: center;
}

.wa-badge {
  position: absolute;
  right: -1px;
  top: 3px;
  min-width: 28px;
  height: 19px;
  padding: 0 4px;
  border-radius: 10px;
  background: #ab4ec6;
  color: #fff;
  font-size: 14px;
  line-height: 19px;
  text-align: center;
}

.running {
  position: absolute;
  left: 50%;
  bottom: -1px;
  width: 8px;
  height: 4px;
  margin-left: -4px;
  border-radius: 2px;
  background: #7b7b7b;
}

.run-active {
  width: 20px;
  margin-left: -10px;
  bottom: 1px;
  background: #ab4ec6;
}

.tray {
  margin-left: auto;
  padding-right: 24px;
  display: flex;
  align-items: center;
}

.tray-lang {
  width: 40px;
  margin-left: 20px;
  text-align: center;
  font-size: 15px;
  line-height: 20px;
}

.tray-icons {
  margin-left: 16px;
  display: flex;
  align-items: center;
  gap: 8px;
}

.tray-clock {
  margin-left: 20px;
  width: 78px;
  text-align: right;
  font-size: 14.500px;
  line-height: 20px;
  white-space: nowrap;
}
```
